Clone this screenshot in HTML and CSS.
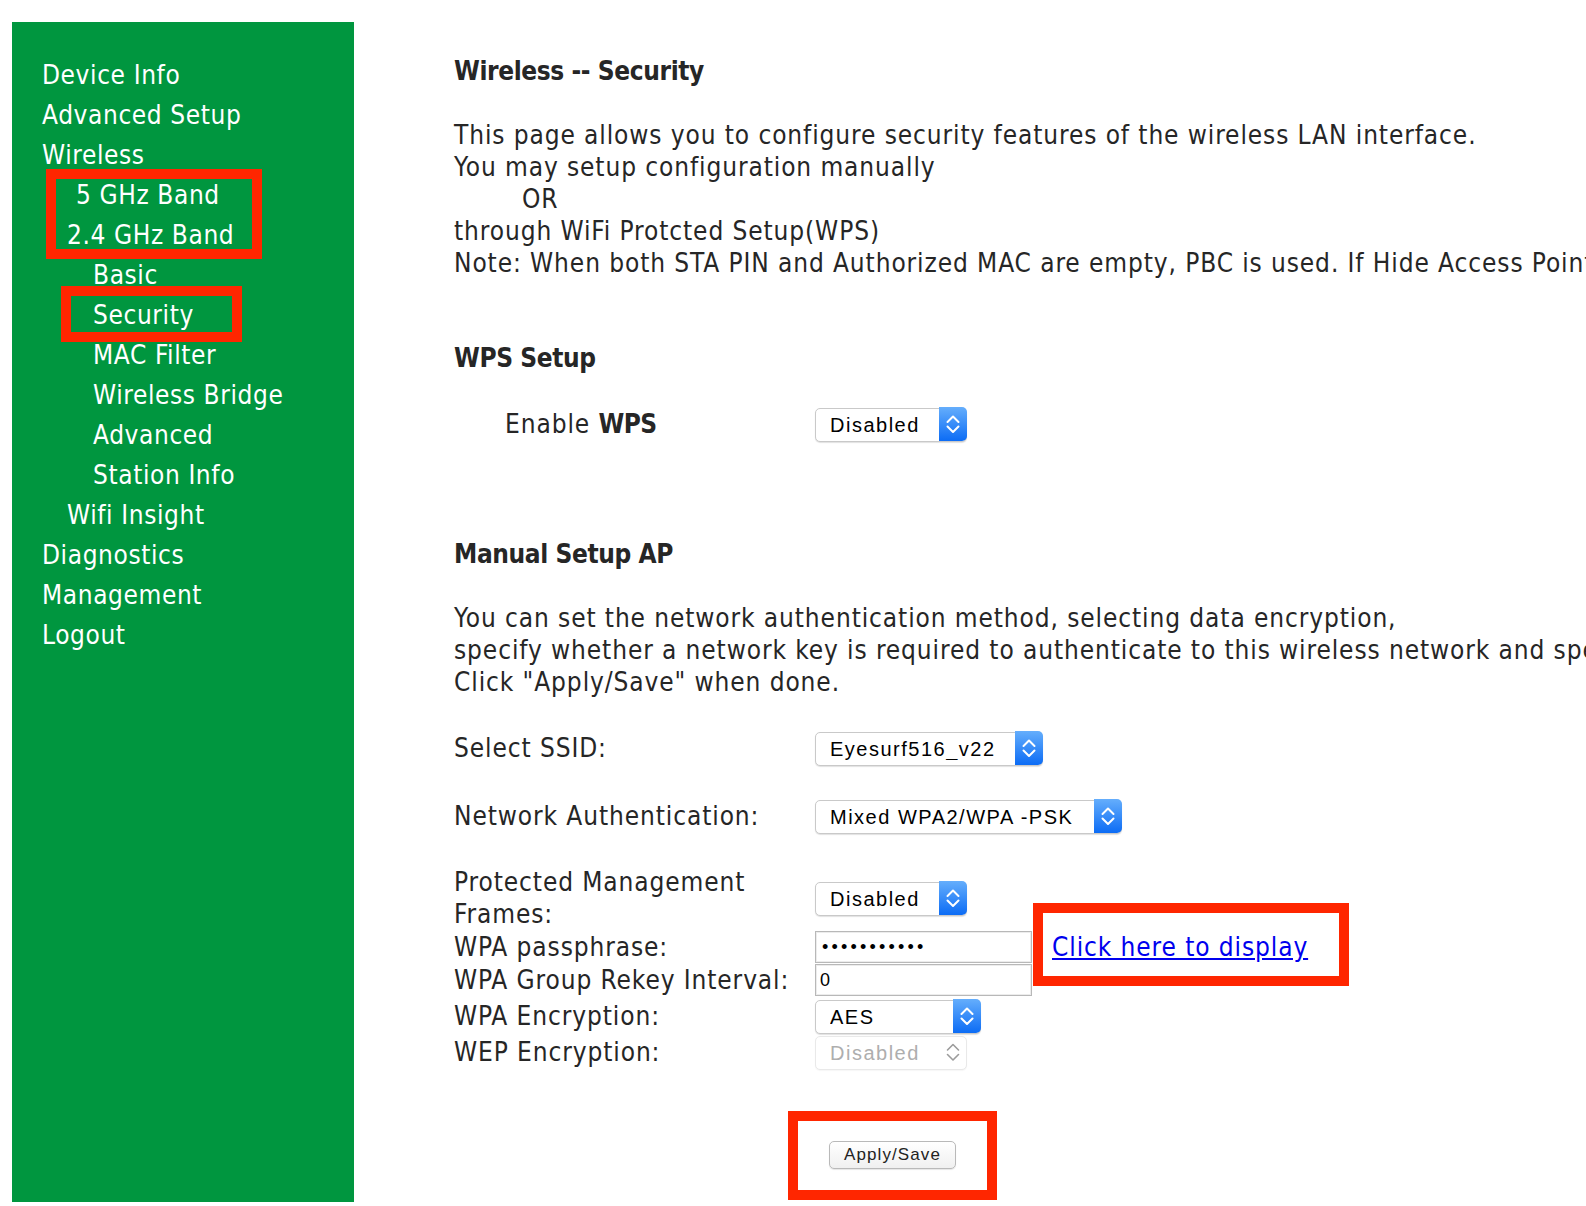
FILE: index.html
```html
<!DOCTYPE html>
<html lang="en">
<head>
  <meta charset="UTF-8">
  <title>Wireless -- Security</title>
  <link rel="stylesheet" href="styles.css">
</head>
<body>
<div class="page">

  <!-- left menu -->
  <nav class="menu">
    <a href="#">Device Info</a>
    <a href="#">Advanced Setup</a>
    <a href="#">Wireless</a>
    <a href="#" class="l1b">5 GHz Band</a>
    <a href="#" class="l1">2.4 GHz Band</a>
    <a href="#" class="l2">Basic</a>
    <a href="#" class="l2">Security</a>
    <a href="#" class="l2">MAC Filter</a>
    <a href="#" class="l2">Wireless Bridge</a>
    <a href="#" class="l2">Advanced</a>
    <a href="#" class="l2">Station Info</a>
    <a href="#" class="l1">Wifi Insight</a>
    <a href="#">Diagnostics</a>
    <a href="#">Management</a>
    <a href="#">Logout</a>
  </nav>

  <main class="content">
    <h1 class="title">Wireless -- Security</h1>
    <p class="text intro">
      This page allows you to configure security features of the wireless LAN interface.<br>
      You may setup configuration manually<br>
      <span class="or">OR</span><br>
      through WiFi Protcted Setup(WPS)<br>
      Note: When both STA PIN and Authorized MAC are empty, PBC is used. If Hide Access Point enabled or Mac filter list is empty with "allow" chosen, WPS2 will be disabled
    </p>

    <h2 class="title wps-title">WPS Setup</h2>
    <div class="row wps-row">
      <div class="label wps-label">Enable <b>WPS</b></div>
      <span class="select">
        <select><option>Disabled</option></select>
        <span class="arrow"><svg width="28" height="34" viewBox="0 0 28 34"><path d="M8.5 15 L14 9.5 L19.5 15 M8.5 19.5 L14 25 L19.5 19.5"/></svg></span>
      </span>
    </div>

    <h2 class="title manual-title">Manual Setup AP</h2>
    <p class="text manual-text">
      You can set the network authentication method, selecting data encryption,<br>
      specify whether a network key is required to authenticate to this wireless network and specify the encryption strength.<br>
      Click "Apply/Save" when done.
    </p>

    <div class="row ssid-row">
      <div class="label">Select SSID:</div>
      <span class="select">
        <select><option>Eyesurf516_v22</option></select>
        <span class="arrow"><svg width="28" height="34" viewBox="0 0 28 34"><path d="M8.5 15 L14 9.5 L19.5 15 M8.5 19.5 L14 25 L19.5 19.5"/></svg></span>
      </span>
    </div>

    <div class="row auth-row">
      <div class="label">Network Authentication:</div>
      <span class="select">
        <select><option>Mixed WPA2/WPA -PSK</option></select>
        <span class="arrow"><svg width="28" height="34" viewBox="0 0 28 34"><path d="M8.5 15 L14 9.5 L19.5 15 M8.5 19.5 L14 25 L19.5 19.5"/></svg></span>
      </span>
    </div>

    <div class="row pmf-row">
      <div class="label">Protected Management<br>Frames:</div>
      <span class="select">
        <select><option>Disabled</option></select>
        <span class="arrow"><svg width="28" height="34" viewBox="0 0 28 34"><path d="M8.5 15 L14 9.5 L19.5 15 M8.5 19.5 L14 25 L19.5 19.5"/></svg></span>
      </span>
    </div>

    <div class="row tight-row">
      <div class="label">WPA passphrase:</div>
      <input class="field pass" type="password" value="aaaaaaaaaaa">
      <a href="#" class="show-link">Click here to display</a>
    </div>

    <div class="row tight-row">
      <div class="label">WPA Group Rekey Interval:</div>
      <input class="field" type="text" value="0">
    </div>

    <div class="row enc-row">
      <div class="label">WPA Encryption:</div>
      <span class="select">
        <select class="wide"><option>AES</option></select>
        <span class="arrow"><svg width="28" height="34" viewBox="0 0 28 34"><path d="M8.5 15 L14 9.5 L19.5 15 M8.5 19.5 L14 25 L19.5 19.5"/></svg></span>
      </span>
    </div>

    <div class="row wep-row">
      <div class="label">WEP Encryption:</div>
      <span class="select off">
        <select disabled><option>Disabled</option></select>
        <span class="arrow"><svg width="28" height="34" viewBox="0 0 28 34"><path d="M8.5 15 L14 9.5 L19.5 15 M8.5 19.5 L14 25 L19.5 19.5"/></svg></span>
      </span>
    </div>

    <button class="save">Apply/Save</button>
  </main>

  <!-- red annotation frames -->
  <div class="mark mark-band"></div>
  <div class="mark mark-sec"></div>
  <div class="mark mark-link"></div>
  <div class="mark mark-save"></div>
</div>
</body>
</html>
```

FILE: styles.css
```css
html, body { margin: 0; padding: 0; overflow: hidden; background: #fff; }

.page {
  position: relative;
  display: flex;
  align-items: flex-start;
  height: 1206px;
  padding: 22px 0 0 12px;
  box-sizing: border-box;
}

/* menu */
.menu {
  flex: none;
  width: 342px;
  height: 1180px;
  padding-top: 33px;
  box-sizing: border-box;
  background: #00963f;
  font: 26px/40px "DejaVu Sans Condensed", Tahoma, sans-serif;
  letter-spacing: 0.6px;
}
.menu a { display: block; padding-left: 30px; color: #fff; text-decoration: none; white-space: nowrap; }
.menu .l1 { padding-left: 55px; }
.menu .l1b { padding-left: 64px; }
.menu .l2 { padding-left: 81px; }

/* content */
.content {
  margin-left: 100px;
  padding-top: 33px;
  color: #262626;
  font: 26px/32px "DejaVu Sans Condensed", Tahoma, sans-serif;
  letter-spacing: 0.9px;
  white-space: nowrap;
}
.title { margin: 0; font-size: 26px; line-height: 32px; font-weight: bold; letter-spacing: -0.4px; }
.content b { letter-spacing: -0.5px; }
.text { margin: 0; }
.intro { margin-top: 32px; }
.or { padding-left: 68px; }
.wps-title { margin-top: 63px; }
.wps-row { margin-top: 33px; }
.manual-title { margin-top: 97px; }
.manual-text { margin-top: 32px; }

.row { display: flex; align-items: center; }
.label { flex: none; width: 361px; }
.wps-label { width: 310px; padding-left: 51px; }
.ssid-row { margin-top: 33px; }
.auth-row { margin-top: 34px; }
.pmf-row { margin-top: 33px; }
.tight-row { margin-top: 1px; }
.enc-row { margin-top: 3px; }
.wep-row { margin-top: 2px; }

/* mac style selects */
.select { position: relative; display: inline-block; height: 34px; }
.select select {
  appearance: none;
  -webkit-appearance: none;
  height: 34px;
  margin: 0;
  padding: 0 46px 0 14px;
  border: 1px solid #c9c9c9;
  border-radius: 5px;
  background: #fff;
  color: #000;
  font: 20px "Liberation Sans", Arial, sans-serif;
  letter-spacing: 1.5px;
  box-shadow: 0 1px 1px rgba(0, 0, 0, 0.12);
}
.select select.wide { padding-right: 105px; }
.select .arrow {
  position: absolute;
  top: 0;
  right: 0;
  width: 28px;
  height: 34px;
  border-radius: 0 5px 5px 0;
  background: linear-gradient(#65aefc, #0c6cf5);
}
.select svg { display: block; }
.select path { fill: none; stroke: #fff; stroke-width: 2; stroke-linecap: round; stroke-linejoin: round; }
.select.off select { border-color: #e0e0e0; color: #8c8c8c; background: #fff; box-shadow: 0 1px 1px rgba(0, 0, 0, 0.05); }
.select.off .arrow { background: none; }
.select.off path { stroke: #9c9c9c; stroke-width: 1.6; }

.field {
  width: 217px;
  height: 32px;
  margin: 0;
  padding: 0 4px;
  box-sizing: border-box;
  border: 1px solid #b8b8b8;
  box-shadow: inset 0 0 0 1px #ececec;
  font: 18px "Liberation Sans", Arial, sans-serif;
  color: #000;
}
.pass { padding-left: 6px; letter-spacing: 3.2px; }
.show-link { margin-left: 20px; color: #0000ee; text-decoration: underline; }

.save {
  display: block;
  margin: 72px 0 0 375px;
  width: 127px;
  height: 28px;
  padding: 0;
  border: 1px solid #b9b9b9;
  border-radius: 5px;
  background: linear-gradient(#ffffff, #f0f0f0);
  box-shadow: 0 1px 1px rgba(0, 0, 0, 0.1);
  color: #222;
  font: 17px "Liberation Sans", Arial, sans-serif;
  letter-spacing: 1.1px;
}

/* red frames */
.mark { position: absolute; border: 10px solid #ff2600; box-sizing: border-box; }
.mark-band { left: 46px; top: 169px; width: 216px; height: 90px; }
.mark-sec { left: 61px; top: 286px; width: 181px; height: 56px; }
.mark-link { left: 1033px; top: 903px; width: 316px; height: 83px; }
.mark-save { left: 788px; top: 1111px; width: 209px; height: 89px; }
```
